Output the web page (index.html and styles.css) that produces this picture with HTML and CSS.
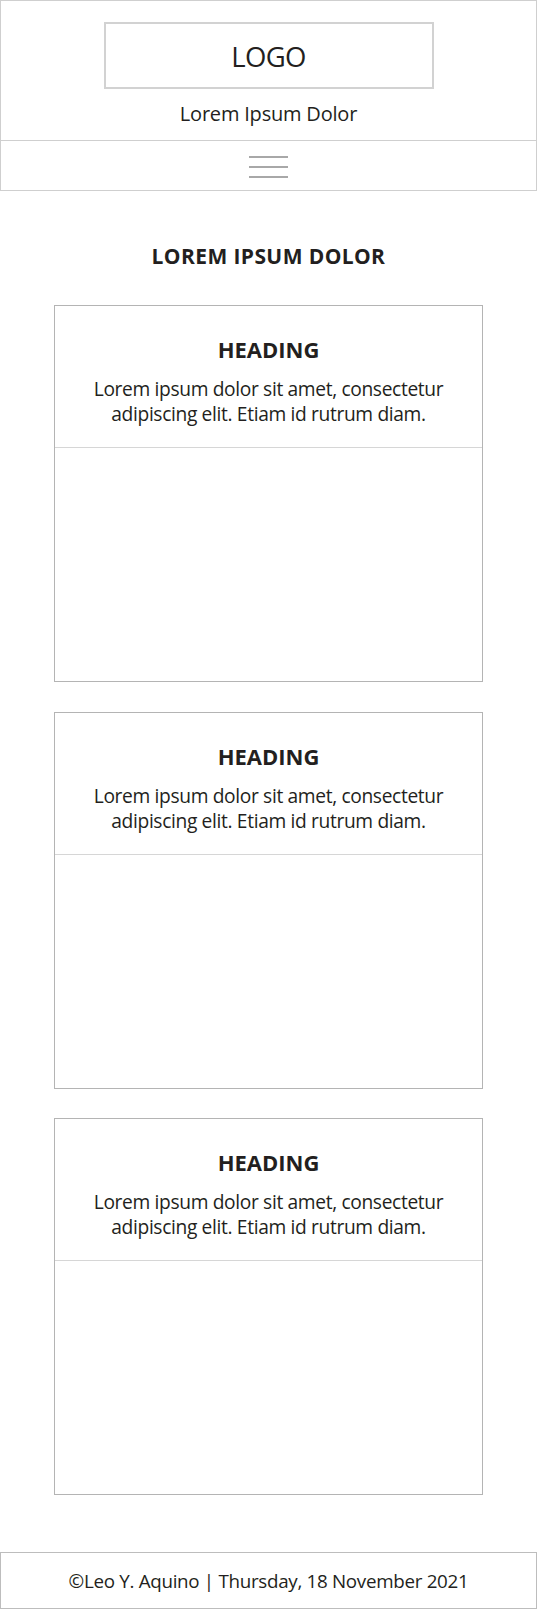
FILE: index.html
```html
<!DOCTYPE html>
<html lang="en">
<head>
<meta charset="utf-8">
<title>Wireframe</title>
<link rel="stylesheet" href="styles.css">
</head>
<body>
<header class="site-header">
  <div class="logo-box"><span class="logo-text">LOGO</span></div>
  <p class="tagline">Lorem Ipsum Dolor</p>
</header>
<nav class="site-nav">
  <div class="hamburger" aria-label="Menu">
    <span class="bar"></span>
    <span class="bar"></span>
    <span class="bar"></span>
  </div>
</nav>
<main class="content">
  <h1 class="page-title">LOREM IPSUM DOLOR</h1>
  <section class="cards">
    <article class="card">
      <div class="card-top">
        <h2 class="card-heading">HEADING</h2>
        <p class="card-text">Lorem ipsum dolor sit amet, consectetur<br>adipiscing elit. Etiam id rutrum diam.</p>
      </div>
      <div class="card-body"></div>
    </article>
    <article class="card">
      <div class="card-top">
        <h2 class="card-heading">HEADING</h2>
        <p class="card-text">Lorem ipsum dolor sit amet, consectetur<br>adipiscing elit. Etiam id rutrum diam.</p>
      </div>
      <div class="card-body"></div>
    </article>
    <article class="card">
      <div class="card-top">
        <h2 class="card-heading">HEADING</h2>
        <p class="card-text">Lorem ipsum dolor sit amet, consectetur<br>adipiscing elit. Etiam id rutrum diam.</p>
      </div>
      <div class="card-body"></div>
    </article>
  </section>
</main>
<footer class="site-footer">
  <p class="footer-text">©Leo Y. Aquino | Thursday, 18 November 2021</p>
</footer>
</body>
</html>
```

FILE: styles.css
```css
* {
  box-sizing: border-box;
}

html, body {
  margin: 0;
  padding: 0;
  background: #ffffff;
}

body {
  width: 537px;
  font-family: "Open Sans", "Noto Sans", "Liberation Sans", sans-serif;
  color: #231f20;
}

.site-header {
  border: 1px solid #cfcfcf;
  height: 141px;
  padding-top: 21px;
  display: flex;
  flex-direction: column;
  align-items: center;
}

.logo-box {
  width: 330px;
  height: 67px;
  border: 2px solid #d2d2d2;
  display: flex;
  align-items: center;
  justify-content: center;
}

.logo-text {
  font-size: 27.5px;
  line-height: 32px;
  letter-spacing: -0.6px;
  padding-top: 2px;
}

.tagline {
  margin: 12px 0 0;
  font-size: 20px;
  line-height: 26px;
  letter-spacing: -0.2px;
}

.site-nav {
  border: 1px solid #cfcfcf;
  border-top: none;
  height: 50px;
  padding-top: 15px;
  display: flex;
  justify-content: center;
}

.hamburger {
  display: flex;
  flex-direction: column;
  gap: 8px;
  width: 39px;
}

.bar {
  display: block;
  height: 2px;
  background: #a8a8a8;
}

.content {
  padding: 53px 54px 0;
}

.page-title {
  margin: 0;
  text-align: center;
  font-size: 21px;
  line-height: 24px;
  font-weight: 700;
  letter-spacing: 0.4px;
}

.cards {
  margin-top: 37px;
  display: flex;
  flex-direction: column;
  gap: 29.5px;
}

.card {
  height: 377px;
  border: 1px solid #b4b4b4;
  display: flex;
  flex-direction: column;
}

.card-top {
  height: 142px;
  border-bottom: 1px solid #d6d6d6;
  padding-top: 29px;
  text-align: center;
}

.card-heading {
  margin: 0;
  font-size: 22px;
  line-height: 28px;
  font-weight: 700;
  letter-spacing: 0;
}

.card-text {
  margin: 13px 0 0;
  font-size: 19.2px;
  line-height: 25px;
  letter-spacing: -0.35px;
}

.card-body {
  flex: 1;
}

.site-footer {
  margin-top: 57px;
  height: 57px;
  border: 1px solid #bdbdbd;
  display: flex;
  align-items: center;
  justify-content: center;
}

.footer-text {
  margin: 0;
  font-size: 18.8px;
  line-height: 26px;
  letter-spacing: -0.3px;
}
```
